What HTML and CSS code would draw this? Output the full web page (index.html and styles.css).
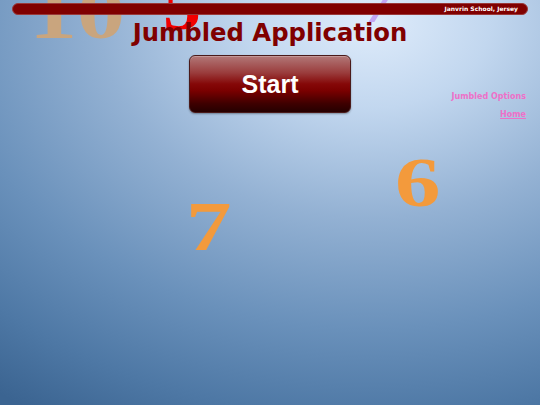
FILE: index.html
```html
<!DOCTYPE html>
<html lang="en">
<head>
<meta charset="utf-8">
<title>Jumbled Application</title>
<link rel="stylesheet" href="styles.css">
</head>
<body>
<div class="stage">
  <div class="digit d10">10</div>
  <div class="digit d5">5</div>
  <div class="digit d7top">7</div>
  <div class="digit d6">6</div>
  <div class="digit d7">7</div>

  <header class="topbar"><span class="school">Janvrin School, Jersey</span></header>
  <h1 class="title">Jumbled Application</h1>
  <div class="main">
    <div class="spacer"></div>
    <button class="start">Start</button>
    <nav class="side">
      <a class="link" href="#">Jumbled Options</a>
      <a class="link home" href="#">Home</a>
    </nav>
  </div>
</div>
</body>
</html>
```

FILE: styles.css
```css
html, body {
  margin: 0;
  padding: 0;
  width: 540px;
  height: 405px;
  overflow: hidden;
}

body {
  background: radial-gradient(ellipse 600px 440px at 370px 20px,
    #dfecfb 0%, #c2d7ef 20%, #93b1d3 45%, #6a91bb 70%, #4e78a5 90%, #3b6491 105%);
  font-family: "DejaVu Sans", Verdana, sans-serif;
}

.stage {
  position: relative;
  width: 540px;
  height: 405px;
}

.digit {
  position: absolute;
  font-family: "Liberation Serif", "Times New Roman", serif;
  font-weight: bold;
  line-height: 1;
  font-size: 70px;
  transform: scaleX(1.3);
  transform-origin: left top;
  z-index: 0;
}

.d10 { left: 29px; top: -27px; font-size: 74px; color: #c9a57e; }
.d5 { left: 163px; top: -29px; font-size: 66px; transform: scaleX(1.15); color: #f20000; }
.d7top { left: 358px; top: -39px; font-weight: normal; color: #c2a6f4; }
.d6 { left: 395px; top: 145px; color: #f39a3c; }
.d7 { left: 186px; top: 189px; color: #f39a3c; }

.topbar {
  position: relative;
  z-index: 1;
  margin: 3px 12px 0;
  height: 10px;
  border: 1px solid #9a3a3a;
  border-radius: 7px;
  background: #800000;
  display: flex;
  justify-content: flex-end;
  align-items: center;
  padding-right: 9px;
}

.school {
  color: #ffffff;
  font-weight: bold;
  font-size: 6px;
  line-height: 10px;
}

.title {
  position: relative;
  z-index: 1;
  margin: 4px 0 0;
  text-align: center;
  color: #800000;
  font-size: 24.3px;
  font-weight: bold;
  line-height: 28px;
}

.main {
  position: relative;
  z-index: 1;
  display: grid;
  grid-template-columns: 1fr 162px 1fr;
  margin-top: 8px;
}

.start {
  width: 162px;
  height: 58px;
  border: 1px solid #4a1a1a;
  border-radius: 6px;
  background: linear-gradient(to bottom, #b27878 0%, #9a3c3c 30%, #850808 50%, #7a0000 62%, #3e0000 85%, #250000 100%);
  box-shadow: 0 1px 2px rgba(0, 0, 0, 0.35), inset 0 1px 0 rgba(255, 255, 255, 0.25);
  color: #ffffff;
  font-family: "Liberation Sans", Arial, sans-serif;
  font-weight: bold;
  font-size: 25px;
  padding: 0;
  display: flex;
  align-items: center;
  justify-content: center;
}

.side {
  display: flex;
  flex-direction: column;
  align-items: flex-end;
  gap: 8px;
  padding-top: 37px;
  padding-right: 14px;
}

.link {
  color: #ee70c8;
  font-weight: bold;
  font-size: 8px;
  line-height: 10px;
  text-decoration: none;
}

.home {
  text-decoration: underline;
}
```
